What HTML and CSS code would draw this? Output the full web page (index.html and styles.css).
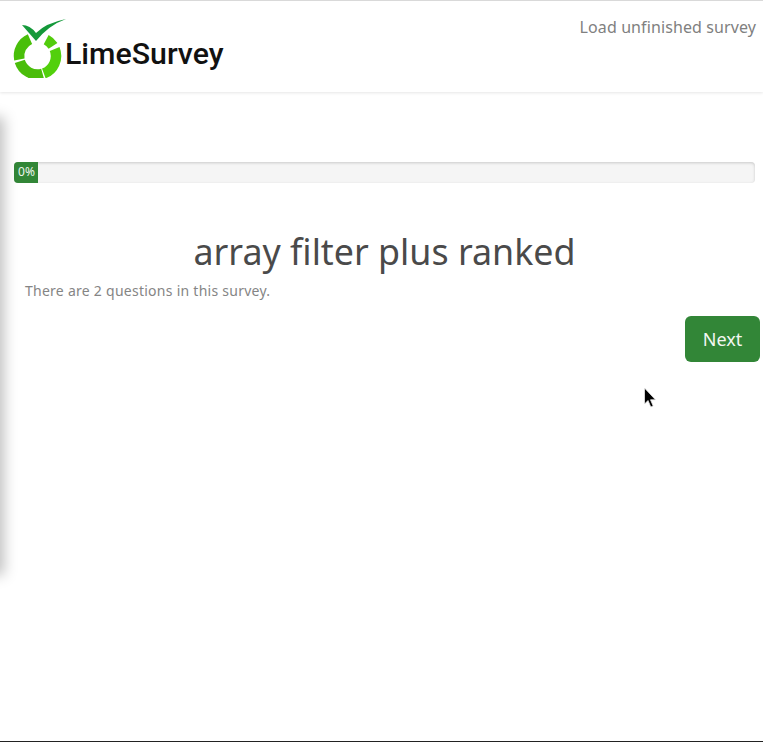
FILE: index.html
```html
<!DOCTYPE html>
<html lang="en">
<head>
<meta charset="utf-8">
<title>array filter plus ranked</title>
<link rel="stylesheet" href="styles.css">
</head>
<body>
<div class="side-shadow"></div>
<header class="topbar">
  <a class="brand" href="#">
    <svg class="brand-mark" width="66" height="78" viewBox="0 0 66 78" aria-hidden="true">
      <g fill="none" stroke-width="10.5">
        <path d="M54.65 49.07A18.5 18.5 0 0 1 43.83 73.38" stroke="#52d00c"/>
        <path d="M42.6 73.78A18.5 18.5 0 0 1 19.81 61.41" stroke="#4abd0a"/>
        <path d="M19.34 59.53A18.5 18.5 0 0 1 29.97 39.09" stroke="#49bf0a"/>
        <path d="M46.18 39.67A18.5 18.5 0 0 1 53.02 45.92" stroke="#52cc0c"/>
      </g>
      <path d="M22 25Q30 25 36 33Q46 23 66 19Q49 25 36 41Z" fill="#14993a"/>
    </svg>
    <span class="brand-name">LimeSurvey</span>
  </a>
  <a class="load-link" href="#">Load unfinished survey</a>
</header>
<main class="content">
  <div class="progress"><div class="progress-bar">0%</div></div>
  <h1 class="title">array filter plus ranked</h1>
  <p class="count">There are 2 questions in this survey.</p>
  <div class="actions"><button class="next" type="button">Next</button></div>
</main>
<svg class="cursor" width="14" height="22" viewBox="0 0 14 22" aria-hidden="true">
  <path d="M1.5 1V17L5 13.5L7.8 20L10.2 19L7.5 12.8H12.5Z" fill="#000" stroke="#e8e8e8" stroke-width=".8"/>
</svg>
</body>
</html>
```
FILE: styles.css
```css
* { box-sizing: border-box; }
html, body { height: 100%; }
body {
  margin: 0;
  position: relative;
  height: 742px;
  overflow: hidden;
  background: #fff;
  border-top: 1px solid #d9d9d9;
  border-bottom: 1px solid #222;
  font-family: "Noto Sans", "Open Sans", sans-serif;
  color: #444;
}
.topbar {
  height: 91px;
  display: flex;
  justify-content: space-between;
  align-items: flex-start;
  padding: 0 7px 0 0;
  background: #fff;
  box-shadow: 0 1px 3px rgba(0,0,0,.1);
}
.brand {
  display: flex;
  align-items: flex-start;
  text-decoration: none;
  color: #111;
}
.brand-mark { flex: none; display: block; margin-top: -1px; }
.brand-name {
  margin: 34px 0 0 -1px;
  font-family: Roboto, "Liberation Sans", sans-serif;
  font-weight: 500;
  font-size: 30.3px;
  line-height: 38px;
  color: #111;
}
.load-link {
  margin-top: 15px;
  font-size: 16px;
  line-height: 22px;
  letter-spacing: .1px;
  color: #808080;
  text-decoration: none;
}
.content {
  padding: 70px 3px 0 14px;
}
.progress {
  width: 741px;
  height: 21px;
  border-radius: 4px;
  background: #f5f5f5;
  box-shadow: inset 0 1px 3px rgba(0,0,0,.18);
  overflow: hidden;
}
.progress-bar {
  width: 24px;
  height: 100%;
  padding-left: 1px;
  background: #328637;
  color: #eef5ee;
  font-size: 12px;
  line-height: 20px;
  text-align: center;
}
.title {
  width: 741px;
  margin: 43px 0 0;
  font-size: 35.8px;
  line-height: 50px;
  font-weight: 400;
  text-align: center;
  color: #4a4a4a;
}
.count {
  margin: 5px 0 0 11px;
  font-size: 14px;
  line-height: 20px;
  letter-spacing: .26px;
  color: #858585;
}
.actions {
  display: flex;
  justify-content: flex-end;
  margin-top: 15px;
}
.next {
  width: 75px;
  height: 46px;
  padding: 0;
  border: 0;
  border-radius: 6px;
  background: #328637;
  color: #f2f7f2;
  font: 400 18px/24px "Noto Sans", "Open Sans", sans-serif;
}
.side-shadow {
  position: absolute;
  left: -20px;
  top: 120px;
  width: 20px;
  height: 450px;
  box-shadow: 0 0 14px 4px rgba(0,0,0,.25);
}
.cursor {
  position: absolute;
  left: 643px;
  top: 386px;
}
```
